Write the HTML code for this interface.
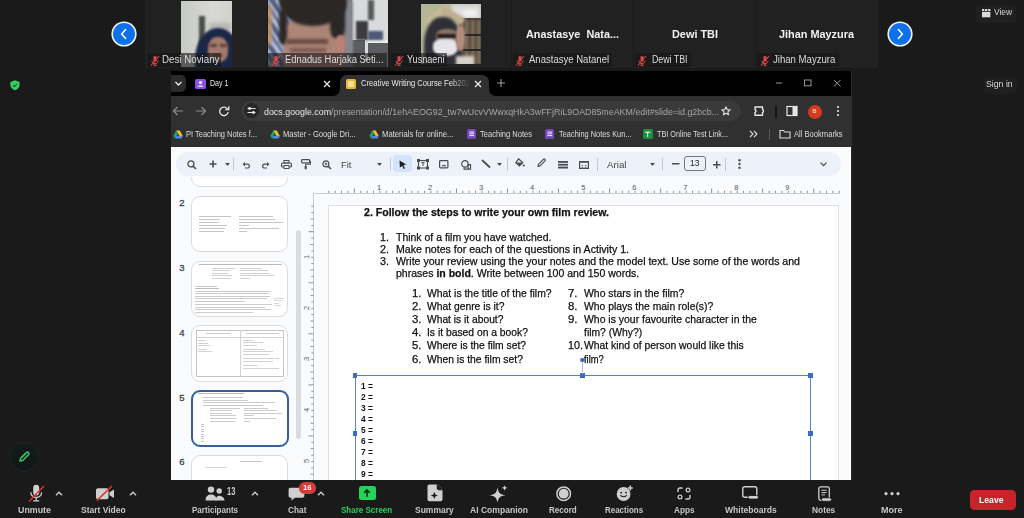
<!DOCTYPE html>
<html><head><meta charset="utf-8">
<style>
*{margin:0;padding:0;box-sizing:border-box}
html,body{width:1024px;height:518px;overflow:hidden;background:#1a1a1a;font-family:"Liberation Sans",sans-serif;position:relative}
.a{position:absolute}
.t{position:absolute;white-space:pre}
svg{overflow:visible}
</style></head><body>
<div class="a" style="left:145px;top:0px;width:122px;height:68px;background:#212121;"></div>
<div class="a" style="left:268px;top:0px;width:121px;height:68px;background:#212121;"></div>
<div class="a" style="left:390px;top:0px;width:121px;height:68px;background:#212121;"></div>
<div class="a" style="left:512px;top:0px;width:121px;height:68px;background:#212121;"></div>
<div class="a" style="left:634px;top:0px;width:121px;height:68px;background:#212121;"></div>
<div class="a" style="left:756px;top:0px;width:122px;height:68px;background:#212121;"></div>
<div class="a" style="left:181px;top:1px;width:51px;height:66px;overflow:hidden;background:linear-gradient(90deg,#c6cac5 0%,#d0d2cd 35%,#d8d8d4 60%,#d2d3ce 100%)">
<div class="a" style="left:18px;top:15px;width:6px;height:36px;background:#4a4d4a;filter:blur(1.2px)"></div>
<div class="a" style="left:28px;top:22px;width:22px;height:8px;background:#b4b5b0;filter:blur(2px)"></div>
<div class="a" style="left:14px;top:27px;width:46px;height:62px;border-radius:50% 50% 25% 25%;background:#1c2748;filter:blur(1.3px)"></div>
<div class="a" style="left:27px;top:36px;width:20px;height:25px;border-radius:45% 45% 40% 40%;background:#a27b6c;filter:blur(1.2px)"></div>
<div class="a" style="left:29px;top:43px;width:7px;height:2.5px;background:#5e423a;filter:blur(.8px)"></div>
<div class="a" style="left:39px;top:43px;width:7px;height:2.5px;background:#5e423a;filter:blur(.8px)"></div>
<div class="a" style="left:32px;top:53px;width:10px;height:3px;background:#7a5548;filter:blur(1px)"></div>
</div>
<div class="a" style="left:268px;top:0px;width:120px;height:67px;overflow:hidden;background:#67759a">
<div class="a" style="left:-4px;top:0;width:30px;height:67px;background:repeating-linear-gradient(55deg,#4f5e86 0 5px,#c6cde0 5px 8px,#6878a0 8px 12px,#c6cde0 12px 14px);filter:blur(1.2px)"></div>
<div class="a" style="left:0;top:5px;width:4px;height:40px;background:#c29060;filter:blur(1.5px)"></div>
<div class="a" style="left:84px;top:0;width:36px;height:41px;background:#d8dadc"></div>
<div class="a" style="left:84px;top:40px;width:36px;height:27px;background:#5c5d60"></div>
<div class="a" style="left:77px;top:0;width:8px;height:67px;background:#85868c;filter:blur(1px)"></div>
<div class="a" style="left:97px;top:40px;width:23px;height:3px;background:#ececec;filter:blur(.5px)"></div>
<div class="a" style="left:97px;top:41px;width:2.5px;height:20px;background:#dcdcdc;filter:blur(.5px)"></div>
<div class="a" style="left:88px;top:21px;width:12px;height:19px;background:#3c3c3e;filter:blur(.8px)"></div>
<div class="a" style="left:100px;top:31px;width:15px;height:9px;background:#4c5a76;filter:blur(.8px)"></div>
<div class="a" style="left:100px;top:0;width:6px;height:20px;background:#5a5a5a;filter:blur(1px)"></div>
<div class="a" style="left:15px;top:16px;width:62px;height:62px;border-radius:35% 35% 25% 25%;background:#ac8577;filter:blur(1.5px)"></div>
<div class="a" style="left:11px;top:-22px;width:68px;height:48px;border-radius:50%;background:#2b2725;filter:blur(1.5px)"></div>
<div class="a" style="left:11px;top:10px;width:8px;height:34px;border-radius:30%;background:#2b2725;filter:blur(1.8px)"></div>
<div class="a" style="left:62px;top:0px;width:15px;height:38px;border-radius:30%;background:#2b2725;filter:blur(1.6px)"></div>
<div class="a" style="left:68px;top:35px;width:9px;height:17px;border-radius:40%;background:#b98173;filter:blur(1px)"></div>
<div class="a" style="left:18px;top:39px;width:42px;height:5px;background:#6a4a42;filter:blur(1.6px)"></div>
<div class="a" style="left:22px;top:48px;width:36px;height:4px;background:#7a5850;filter:blur(1.5px)"></div>
</div>
<div class="a" style="left:421px;top:4px;width:60px;height:60px;overflow:hidden;background:#b4b696">
<div class="a" style="left:30px;top:0;width:30px;height:18px;background:#dcdcdc;filter:blur(2px)"></div>
<div class="a" style="left:42px;top:6px;width:14px;height:6px;background:#f4f4f4;filter:blur(2px)"></div>
<div class="a" style="left:38px;top:14px;width:22px;height:46px;background:#4a3f37"></div>
<div class="a" style="left:40px;top:16px;width:20px;height:44px;background:repeating-linear-gradient(90deg,#6d5d4c 0 3px,#2f2a26 3px 4px,#8a7a66 4px 6px);filter:blur(.8px)"></div>
<div class="a" style="left:40px;top:30px;width:20px;height:2px;background:#2a2522"></div>
<div class="a" style="left:40px;top:45px;width:20px;height:2px;background:#2a2522"></div>
<div class="a" style="left:4px;top:7px;width:26px;height:8px;background:#c9b99a;transform:rotate(-35deg);filter:blur(1.2px)"></div>
<div class="a" style="left:20px;top:8px;width:24px;height:8px;background:#bfae90;transform:rotate(30deg);filter:blur(1.2px)"></div>
<div class="a" style="left:3px;top:13px;width:38px;height:60px;border-radius:45% 45% 20% 20%;background:#2f3037;filter:blur(1.5px)"></div>
<div class="a" style="left:15px;top:25px;width:22px;height:15px;border-radius:40%;background:#8e7263;filter:blur(1px)"></div>
<div class="a" style="left:16px;top:30px;width:21px;height:4px;background:#1e1e1e;filter:blur(.8px)"></div>
<div class="a" style="left:12px;top:35px;width:25px;height:17px;border-radius:35% 35% 45% 45%;background:#e4e4ea;filter:blur(1px)"></div>
<div class="a" style="left:35px;top:21px;width:9px;height:26px;border-radius:40%;background:#b48c7c;filter:blur(1.2px)"></div>
<div class="a" style="left:35px;top:52px;width:18px;height:10px;background:#d8d2ca;filter:blur(1.5px)"></div>
</div>
<div class="a" style="left:147px;top:53px;width:74px;height:14px;background:rgba(22,22,22,0.62);"></div>
<svg class="a" style="left:149.5px;top:54.5px" width="10" height="11" viewBox="0 0 10 11"><path d="M3.5 1.2h3v5.2h-3z" fill="#d84a4a"/><path d="M2 5.6c0 2 1.4 3 3 3s3-1 3-3M5 8.6v1.6M3.2 10.3h3.6" stroke="#d84a4a" stroke-width="1" fill="none"/><path d="M1 10.5L9 1" stroke="#d84a4a" stroke-width="1.1"/></svg>
<div class="t" style="left:162.40px;top:54.00px;font-size:10px;line-height:12.0px;color:#dcdcdc;transform:scaleX(0.9759);transform-origin:0 0;">Desi Noviany</div>
<div class="a" style="left:268px;top:53px;width:119px;height:14px;background:rgba(22,22,22,0.62);"></div>
<svg class="a" style="left:270.5px;top:54.5px" width="10" height="11" viewBox="0 0 10 11"><path d="M3.5 1.2h3v5.2h-3z" fill="#d84a4a"/><path d="M2 5.6c0 2 1.4 3 3 3s3-1 3-3M5 8.6v1.6M3.2 10.3h3.6" stroke="#d84a4a" stroke-width="1" fill="none"/><path d="M1 10.5L9 1" stroke="#d84a4a" stroke-width="1.1"/></svg>
<div class="t" style="left:285.30px;top:54.00px;font-size:10px;line-height:12.0px;color:#dcdcdc;transform:scaleX(0.9375);transform-origin:0 0;">Ednadus Harjaka Seti...</div>
<div class="a" style="left:391px;top:53px;width:56px;height:14px;background:rgba(22,22,22,0.62);"></div>
<svg class="a" style="left:393.5px;top:54.5px" width="10" height="11" viewBox="0 0 10 11"><path d="M3.5 1.2h3v5.2h-3z" fill="#d84a4a"/><path d="M2 5.6c0 2 1.4 3 3 3s3-1 3-3M5 8.6v1.6M3.2 10.3h3.6" stroke="#d84a4a" stroke-width="1" fill="none"/><path d="M1 10.5L9 1" stroke="#d84a4a" stroke-width="1.1"/></svg>
<div class="t" style="left:407.30px;top:54.00px;font-size:10px;line-height:12.0px;color:#dcdcdc;transform:scaleX(0.9112);transform-origin:0 0;">Yusnaeni</div>
<div class="a" style="left:512.5px;top:53px;width:99.5px;height:14px;background:rgba(22,22,22,0.62);"></div>
<svg class="a" style="left:515.0px;top:54.5px" width="10" height="11" viewBox="0 0 10 11"><path d="M3.5 1.2h3v5.2h-3z" fill="#d84a4a"/><path d="M2 5.6c0 2 1.4 3 3 3s3-1 3-3M5 8.6v1.6M3.2 10.3h3.6" stroke="#d84a4a" stroke-width="1" fill="none"/><path d="M1 10.5L9 1" stroke="#d84a4a" stroke-width="1.1"/></svg>
<div class="t" style="left:529.30px;top:54.00px;font-size:10px;line-height:12.0px;color:#dcdcdc;transform:scaleX(0.9541);transform-origin:0 0;">Anastasye Natanel</div>
<div class="a" style="left:634.5px;top:53px;width:56.0px;height:14px;background:rgba(22,22,22,0.62);"></div>
<svg class="a" style="left:637.0px;top:54.5px" width="10" height="11" viewBox="0 0 10 11"><path d="M3.5 1.2h3v5.2h-3z" fill="#d84a4a"/><path d="M2 5.6c0 2 1.4 3 3 3s3-1 3-3M5 8.6v1.6M3.2 10.3h3.6" stroke="#d84a4a" stroke-width="1" fill="none"/><path d="M1 10.5L9 1" stroke="#d84a4a" stroke-width="1.1"/></svg>
<div class="t" style="left:652.00px;top:54.00px;font-size:10px;line-height:12.0px;color:#dcdcdc;transform:scaleX(0.8789);transform-origin:0 0;">Dewi TBI</div>
<div class="a" style="left:757px;top:53px;width:81.5px;height:14px;background:rgba(22,22,22,0.62);"></div>
<svg class="a" style="left:759.5px;top:54.5px" width="10" height="11" viewBox="0 0 10 11"><path d="M3.5 1.2h3v5.2h-3z" fill="#d84a4a"/><path d="M2 5.6c0 2 1.4 3 3 3s3-1 3-3M5 8.6v1.6M3.2 10.3h3.6" stroke="#d84a4a" stroke-width="1" fill="none"/><path d="M1 10.5L9 1" stroke="#d84a4a" stroke-width="1.1"/></svg>
<div class="t" style="left:773.30px;top:54.00px;font-size:10px;line-height:12.0px;color:#dcdcdc;transform:scaleX(0.9595);transform-origin:0 0;">Jihan Mayzura</div>
<div class="t" style="left:526.00px;top:27.90px;font-size:11.5px;line-height:13.799999999999999px;color:#f2f2f2;font-weight:bold;transform:scaleX(0.9448);transform-origin:0 0;">Anastasye&nbsp; Nata...</div>
<div class="t" style="left:671.50px;top:27.90px;font-size:11.5px;line-height:13.799999999999999px;color:#f2f2f2;font-weight:bold;transform:scaleX(0.9472);transform-origin:0 0;">Dewi TBI</div>
<div class="t" style="left:778.80px;top:27.90px;font-size:11.5px;line-height:13.799999999999999px;color:#f2f2f2;font-weight:bold;transform:scaleX(0.9464);transform-origin:0 0;">Jihan Mayzura</div>
<div class="a" style="left:112.6px;top:22.6px;width:22px;height:22px;border-radius:50%;background:#0e71eb;box-shadow:0 0 0 1.6px #f4f4f4"></div>
<svg class="a" style="left:111.6px;top:21.6px" width="24" height="24" viewBox="0 0 24 24"><path d="M13.6 7.5L9.6 12L13.6 16.5" stroke="#fff" stroke-width="1.6" fill="none" stroke-linecap="round" stroke-linejoin="round"/></svg>
<div class="a" style="left:888.5px;top:22.6px;width:22px;height:22px;border-radius:50%;background:#0e71eb;box-shadow:0 0 0 1.6px #f4f4f4"></div>
<svg class="a" style="left:887.5px;top:21.6px" width="24" height="24" viewBox="0 0 24 24"><path d="M10.4 7.5L14.4 12L10.4 16.5" stroke="#fff" stroke-width="1.6" fill="none" stroke-linecap="round" stroke-linejoin="round"/></svg>
<div class="a" style="left:976px;top:5px;width:40px;height:18px;background:#202020;border-radius:4px;"></div>
<svg class="a" style="left:981.5px;top:8.7px" width="8.4" height="8.3" viewBox="0 0 8.4 8.3"><rect x="0" y="0" width="2.3" height="2" fill="#d8d8d8"/><rect x="3.05" y="0" width="2.3" height="2" fill="#d8d8d8"/><rect x="6.1" y="0" width="2.3" height="2" fill="#d8d8d8"/><rect x="0" y="2.8" width="8.4" height="5.5" fill="#d8d8d8"/></svg>
<div class="t" style="left:994.00px;top:7.18px;font-size:9.2px;line-height:11.04px;color:#d6d6d6;transform:scaleX(0.9215);transform-origin:0 0;">View</div>
<div class="a" style="left:983.5px;top:76.7px;width:33px;height:17.6px;background:#1f1f1f;border-radius:4px;"></div>
<div class="t" style="left:985.60px;top:78.82px;font-size:9.3px;line-height:11.16px;color:#d8d8d8;transform:scaleX(0.9389);transform-origin:0 0;">Sign in</div>
<svg class="a" style="left:9.8px;top:79.8px" width="10" height="10.5" viewBox="0 0 10 10.5"><path d="M5 0.3 L9.6 1.9 V5 C9.6 7.7 7.4 9.5 5 10.2 C2.6 9.5 0.4 7.7 0.4 5 V1.9 Z" fill="#36cf63"/><path d="M2.9 5.1 L4.4 6.6 L7.2 3.7" stroke="#0b6a2a" stroke-width="1.2" fill="none"/></svg>
<div class="a" style="left:8.8px;top:442px;width:30px;height:30px;background:#131819;border-radius:50%;border:1px solid #1f2526;"></div>
<svg class="a" style="left:17px;top:450px" width="14" height="14" viewBox="0 0 14 14"><path d="M3 11 L3.6 8.4 L9.4 2.6 C10 2 10.9 2 11.5 2.6 C12.1 3.2 12.1 4.1 11.5 4.7 L5.7 10.5 Z" stroke="#37c86a" stroke-width="1.5" fill="none" stroke-linejoin="round"/></svg>
<div class="a" style="left:171px;top:71px;width:681px;height:409px;background:#000;"></div>
<div class="a" style="left:851px;top:71px;width:1.2px;height:409px;background:#2a2a2a;"></div>
<div class="a" style="left:171px;top:75px;width:15px;height:17px;background:#2a2a2a;border-radius:0 5px 5px 0;"></div>
<svg class="a" style="left:174px;top:80px" width="9" height="7" viewBox="0 0 9 7"><path d="M1.5 2 L4.5 5 L7.5 2" stroke="#e8e8e8" stroke-width="1.4" fill="none"/></svg>
<div class="a" style="left:195px;top:79px;width:11px;height:9.5px;background:#8b4fe3;border-radius:1.5px;"></div>
<svg class="a" style="left:195px;top:79px" width="11" height="9.5" viewBox="0 0 11 9.5"><circle cx="5.5" cy="3.5" r="1.6" fill="#fff"/><path d="M2.6 7.8 C3 5.9 8 5.9 8.4 7.8Z" fill="#fff"/></svg>
<div class="t" style="left:210.00px;top:78.34px;font-size:8.6px;line-height:10.319999999999999px;color:#e6e6e6;transform:scaleX(0.8239);transform-origin:0 0;">Day 1</div>
<svg class="a" style="left:323px;top:80px" width="8" height="8" viewBox="0 0 8 8"><path d="M1 1L7 7M7 1L1 7" stroke="#e6e6e6" stroke-width="1.3"/></svg>
<div class="a" style="left:340px;top:75px;width:149px;height:21px;background:#303030;border-radius:7px 7px 0 0;"></div>
<svg class="a" style="left:333px;top:88px" width="7" height="8" viewBox="0 0 7 8"><path d="M7 0 V8 H0 C4 8 7 5 7 0Z" fill="#303030"/></svg>
<svg class="a" style="left:489px;top:88px" width="7" height="8" viewBox="0 0 7 8"><path d="M0 0 V8 H7 C3 8 0 5 0 0Z" fill="#303030"/></svg>
<div class="a" style="left:346px;top:78.7px;width:10px;height:10px;background:#e9b73a;border-radius:1.5px;"></div>
<div class="a" style="left:347.8px;top:80.6px;width:6.4px;height:6.2px;background:#f7df8e;"></div>
<div class="t" style="left:361.00px;top:78.16px;font-size:8.9px;line-height:10.68px;color:#e8e8e8;transform:scaleX(0.8609);transform-origin:0 0;-webkit-mask-image:linear-gradient(90deg,#000 82%,transparent 100%);">Creative Writing Course Feb202</div>
<svg class="a" style="left:474px;top:80px" width="8" height="8" viewBox="0 0 8 8"><path d="M1 1L7 7M7 1L1 7" stroke="#eaeaea" stroke-width="1.3"/></svg>
<svg class="a" style="left:496px;top:78px" width="10" height="10" viewBox="0 0 10 10"><path d="M5 1V9M1 5H9" stroke="#9a9a9a" stroke-width="1.1"/></svg>
<svg class="a" style="left:775px;top:78px" width="70" height="10" viewBox="0 0 70 10"><path d="M1 5H7" stroke="#9a9a9a" stroke-width="1"/><rect x="29.5" y="2" width="6.5" height="5.8" stroke="#9a9a9a" stroke-width="1" fill="none"/><path d="M59 2L65.5 8.5M65.5 2L59 8.5" stroke="#9a9a9a" stroke-width="1"/></svg>
<div class="a" style="left:171px;top:95.5px;width:681px;height:51.5px;background:#303030;"></div>
<svg class="a" style="left:172px;top:105px" width="60" height="12" viewBox="0 0 60 12"><path d="M11 6H1.5M5.5 2L1.5 6L5.5 10" stroke="#8c8c8c" stroke-width="1.2" fill="none"/><path d="M24 6H33.5M29.5 2L33.5 6L29.5 10" stroke="#8c8c8c" stroke-width="1.2" fill="none"/><path d="M55.6 4 A4.3 4.3 0 1 0 56.2 7.2" stroke="#e6e6e6" stroke-width="1.3" fill="none"/><path d="M56.8 1.2V4.6H53.4" stroke="#e6e6e6" stroke-width="1.3" fill="none"/></svg>
<div class="a" style="left:241px;top:101px;width:500px;height:19.5px;background:#3a3a3a;border-radius:10px;"></div>
<div class="a" style="left:244px;top:103px;width:15px;height:15px;background:#272727;border-radius:50%;"></div>
<svg class="a" style="left:246px;top:105px" width="11" height="11" viewBox="0 0 11 11"><path d="M1.5 3.5H9.5M1.5 7.5H9.5" stroke="#e6e6e6" stroke-width="1.1"/><circle cx="3.6" cy="3.5" r="1.4" fill="#e6e6e6"/><circle cx="7.4" cy="7.5" r="1.4" fill="#e6e6e6"/></svg>
<div class="t" style="left:264.00px;top:105.56px;font-size:9.4px;line-height:11.28px;color:#a6a6a6;transform:scaleX(0.9465);transform-origin:0 0;"><span style="color:#e8e8e8">docs.google.com</span>/presentation/d/1ehAEOG92_tw7wUcvVWwxqHkA3wFFjRiL9OAD85meAKM/edit#slide=id.g2bcb...</div>
<svg class="a" style="left:721px;top:106px" width="10" height="10" viewBox="0 0 10 10"><path d="M5 0.8 L6.2 3.6 L9.2 3.9 L6.9 5.8 L7.6 8.8 L5 7.2 L2.4 8.8 L3.1 5.8 L0.8 3.9 L3.8 3.6 Z" stroke="#e0e0e0" stroke-width="1.1" fill="none" stroke-linejoin="round"/></svg>
<svg class="a" style="left:752.5px;top:105px" width="12" height="12" viewBox="0 0 12 12"><path d="M2 2 H9.5 V4.5 C10.8 4.5 10.8 7.5 9.5 7.5 V10.2 H2 V7.5 C3.2 7.5 3.2 4.5 2 4.5 Z" stroke="#e6e6e6" stroke-width="1.4" fill="none" stroke-linejoin="round"/></svg>
<div class="a" style="left:774.5px;top:105.5px;width:2px;height:12px;background:#141414;"></div>
<svg class="a" style="left:786px;top:105px" width="12" height="12" viewBox="0 0 12 12"><rect x="1" y="1.5" width="10" height="9" stroke="#e6e6e6" stroke-width="1.2" fill="none"/><rect x="6.5" y="1.5" width="4.5" height="9" fill="#e6e6e6"/></svg>
<div class="a" style="left:807.5px;top:104.5px;width:14px;height:14px;background:#d23c1c;border-radius:50%;"></div>
<div class="t" style="left:812.51px;top:108.20px;font-size:5.5px;line-height:6.6px;color:#f4d0c8;font-weight:bold;">B</div>
<svg class="a" style="left:836px;top:105px" width="4" height="12" viewBox="0 0 4 12"><circle cx="2" cy="2" r="1.1" fill="#e6e6e6"/><circle cx="2" cy="6" r="1.1" fill="#e6e6e6"/><circle cx="2" cy="10" r="1.1" fill="#e6e6e6"/></svg>
<svg class="a" style="left:172.5px;top:129.5px" width="10" height="9" viewBox="0 0 10 9"><path d="M3.3 0.5h3.4l3 5.2-1.7 2.8z" fill="#f9bd2c"/><path d="M3.3 0.5L0.3 5.7 2 8.5 5 3.3z" fill="#1fa463"/><path d="M2 8.5h6l1.7-2.8H3.7z" fill="#4e89f5"/></svg>
<div class="t" style="left:185.50px;top:128.78px;font-size:8.7px;line-height:10.44px;color:#dcdcdc;transform:scaleX(0.8614);transform-origin:0 0;">PI Teaching Notes f...</div>
<svg class="a" style="left:270px;top:129.5px" width="10" height="9" viewBox="0 0 10 9"><path d="M3.3 0.5h3.4l3 5.2-1.7 2.8z" fill="#f9bd2c"/><path d="M3.3 0.5L0.3 5.7 2 8.5 5 3.3z" fill="#1fa463"/><path d="M2 8.5h6l1.7-2.8H3.7z" fill="#4e89f5"/></svg>
<div class="t" style="left:283.00px;top:128.78px;font-size:8.7px;line-height:10.44px;color:#dcdcdc;transform:scaleX(0.8730);transform-origin:0 0;">Master - Google Dri...</div>
<svg class="a" style="left:369px;top:129.5px" width="10" height="9" viewBox="0 0 10 9"><path d="M3.3 0.5h3.4l3 5.2-1.7 2.8z" fill="#f9bd2c"/><path d="M3.3 0.5L0.3 5.7 2 8.5 5 3.3z" fill="#1fa463"/><path d="M2 8.5h6l1.7-2.8H3.7z" fill="#4e89f5"/></svg>
<div class="t" style="left:382.00px;top:128.78px;font-size:8.7px;line-height:10.44px;color:#dcdcdc;transform:scaleX(0.8866);transform-origin:0 0;">Materials for online...</div>
<div class="a" style="left:466.5px;top:129.2px;width:9.5px;height:9.5px;background:#7248b9;border-radius:1.5px;"></div>
<svg class="a" style="left:466.5px;top:129.2px" width="9.5" height="9.5" viewBox="0 0 9.5 9.5"><path d="M2.3 3H7.2M2.3 4.8H7.2M2.3 6.6H7.2" stroke="#fff" stroke-width="0.9"/></svg>
<div class="t" style="left:480.00px;top:128.78px;font-size:8.7px;line-height:10.44px;color:#dcdcdc;transform:scaleX(0.8682);transform-origin:0 0;">Teaching Notes</div>
<div class="a" style="left:544.5px;top:129.2px;width:9.5px;height:9.5px;background:#7248b9;border-radius:1.5px;"></div>
<svg class="a" style="left:544.5px;top:129.2px" width="9.5" height="9.5" viewBox="0 0 9.5 9.5"><path d="M2.3 3H7.2M2.3 4.8H7.2M2.3 6.6H7.2" stroke="#fff" stroke-width="0.9"/></svg>
<div class="t" style="left:558.50px;top:128.78px;font-size:8.7px;line-height:10.44px;color:#dcdcdc;transform:scaleX(0.8529);transform-origin:0 0;">Teaching Notes Kun...</div>
<div class="a" style="left:643px;top:129.2px;width:9.5px;height:9.5px;background:#1e8e3e;border-radius:1.5px;"></div>
<svg class="a" style="left:643px;top:129.2px" width="9.5" height="9.5" viewBox="0 0 9.5 9.5"><path d="M2 3.2H7.5M4.7 3.2V8" stroke="#fff" stroke-width="1"/></svg>
<div class="t" style="left:657.00px;top:128.78px;font-size:8.7px;line-height:10.44px;color:#dcdcdc;transform:scaleX(0.8370);transform-origin:0 0;">TBI Online Test Link...</div>
<svg class="a" style="left:749px;top:130px" width="9" height="8" viewBox="0 0 9 8"><path d="M1 1L4 4L1 7M5 1L8 4L5 7" stroke="#dcdcdc" stroke-width="1.1" fill="none"/></svg>
<div class="a" style="left:768.5px;top:128.5px;width:1.2px;height:11px;background:#5a5a5a;"></div>
<svg class="a" style="left:779px;top:129px" width="12" height="10" viewBox="0 0 12 10"><path d="M1 1.5H4.5L5.8 3H11V9H1Z" stroke="#dcdcdc" stroke-width="1.1" fill="none"/></svg>
<div class="t" style="left:794.00px;top:128.78px;font-size:8.7px;line-height:10.44px;color:#dcdcdc;transform:scaleX(0.8734);transform-origin:0 0;">All Bookmarks</div>
<div class="a" style="left:171px;top:147px;width:680px;height:333px;overflow:hidden;background:#f9fbfd">
<div class="a" style="left:5px;top:4.5px;width:664.5px;height:24.3px;background:#edf2fa;border-radius:12px;"></div>
<svg class="a" style="left:16px;top:12.5px" width="10" height="10" viewBox="0 0 10 10"><circle cx="3.9" cy="3.9" r="3" stroke="#4a4d50" stroke-width="1.3" fill="none"/><path d="M6.1 6.1L9 9" stroke="#4a4d50" stroke-width="1.5"/></svg>
<svg class="a" style="left:38px;top:13px" width="8" height="8" viewBox="0 0 8 8"><path d="M4 0.5V7.5M0.5 4H7.5" stroke="#4a4d50" stroke-width="1.6"/></svg>
<svg class="a" style="left:53.5px;top:16px" width="5" height="3" viewBox="0 0 5 3"><path d="M0 0H5L2.5 3Z" fill="#4a4d50"/></svg>
<div class="a" style="left:62px;top:10.5px;width:0.9px;height:13px;background:#c7c7c7;"></div>
<svg class="a" style="left:71px;top:13.5px" width="8" height="7.5" viewBox="0 0 8 7.5"><path d="M2.2 3.2H5.3C6.6 3.2 7.4 4.1 7.4 5.2C7.4 6.3 6.6 7 5.3 7H3" stroke="#4a4d50" stroke-width="1.2" fill="none"/><path d="M0.6 3.2L3 0.9V5.5Z" fill="#4a4d50"/></svg>
<svg class="a" style="left:91px;top:13.5px" width="8" height="7.5" viewBox="0 0 8 7.5"><path d="M5.8 3.2H2.7C1.4 3.2 0.6 4.1 0.6 5.2C0.6 6.3 1.4 7 2.7 7H5" stroke="#4a4d50" stroke-width="1.2" fill="none"/><path d="M7.4 3.2L5 0.9V5.5Z" fill="#4a4d50"/></svg>
<svg class="a" style="left:110px;top:12.5px" width="11" height="9" viewBox="0 0 11 9"><rect x="3" y="0.5" width="5" height="2.5" stroke="#4a4d50" stroke-width="1" fill="none"/><rect x="0.6" y="3" width="9.8" height="4" rx="1" stroke="#4a4d50" stroke-width="1.2" fill="none"/><rect x="3" y="5.5" width="5" height="3" stroke="#4a4d50" stroke-width="1" fill="#edf2fa"/></svg>
<svg class="a" style="left:130px;top:12px" width="10" height="10.5" viewBox="0 0 10 10.5"><rect x="0.6" y="0.6" width="8" height="3.2" rx="0.8" stroke="#4a4d50" stroke-width="1.2" fill="none"/><path d="M8.6 2.2H9.4V5.3H4.7V7" stroke="#4a4d50" stroke-width="1.1" fill="none"/><rect x="3.6" y="7" width="2.2" height="3.3" rx="0.6" fill="#4a4d50"/></svg>
<svg class="a" style="left:151px;top:12.5px" width="10" height="10" viewBox="0 0 10 10"><circle cx="3.9" cy="3.9" r="3" stroke="#4a4d50" stroke-width="1.2" fill="none"/><path d="M6.1 6.1L9 9" stroke="#4a4d50" stroke-width="1.5"/><path d="M3.9 2.5V5.3M2.5 3.9H5.3" stroke="#4a4d50" stroke-width="0.9"/></svg>
<div class="t" style="left:170.00px;top:11.50px;font-size:9.5px;line-height:11.4px;color:#444746;transform:scaleX(0.9941);transform-origin:0 0;">Fit</div>
<svg class="a" style="left:205.5px;top:16px" width="5" height="3" viewBox="0 0 5 3"><path d="M0 0H5L2.5 3Z" fill="#4a4d50"/></svg>
<div class="a" style="left:219.3px;top:10.5px;width:0.9px;height:13px;background:#c7c7c7;"></div>
<div class="a" style="left:222px;top:8px;width:19px;height:17.4px;background:#d3e3fd;border-radius:4px;"></div>
<svg class="a" style="left:228px;top:13px" width="8" height="9.5" viewBox="0 0 8 9.5"><path d="M0.5 0.5L7.3 4.6L4.4 5.2L6 8.6L4.8 9.1L3.3 5.9L0.9 7.6Z" fill="#1f1f1f"/></svg>
<svg class="a" style="left:246px;top:12px" width="12" height="10.5" viewBox="0 0 12 10.5"><rect x="1.5" y="1.5" width="9" height="7.5" stroke="#4a4d50" stroke-width="1.1" fill="none"/><rect x="0" y="0" width="3" height="3" fill="#4a4d50"/><rect x="9" y="0" width="3" height="3" fill="#4a4d50"/><rect x="0" y="7.5" width="3" height="3" fill="#4a4d50"/><rect x="9" y="7.5" width="3" height="3" fill="#4a4d50"/><path d="M4.3 3.6H7.7M6 3.6V7" stroke="#4a4d50" stroke-width="1"/></svg>
<svg class="a" style="left:268px;top:13px" width="9.5" height="8.5" viewBox="0 0 9.5 8.5"><rect x="0.6" y="0.6" width="8.3" height="7.3" rx="0.8" stroke="#4a4d50" stroke-width="1.2" fill="none"/><path d="M2.5 6.2L4 4.6L5 5.6L6 4.5L7.2 6.2Z" fill="#4a4d50"/></svg>
<svg class="a" style="left:289.5px;top:12.5px" width="11" height="10" viewBox="0 0 11 10"><circle cx="3.9" cy="3.9" r="3.2" stroke="#4a4d50" stroke-width="1.2" fill="none"/><path d="M7 4.6V9.2H3.1V7.2" stroke="#4a4d50" stroke-width="1.2" fill="none" stroke-linejoin="round"/><path d="M7 4.6H9.5V9.2H7" stroke="#4a4d50" stroke-width="1.2" fill="none"/></svg>
<svg class="a" style="left:309.5px;top:12px" width="10" height="9.5" viewBox="0 0 10 9.5"><path d="M1.5 1.5L8.5 8" stroke="#4a4d50" stroke-width="1.8" stroke-linecap="round"/></svg>
<svg class="a" style="left:326px;top:16px" width="5" height="3" viewBox="0 0 5 3"><path d="M0 0H5L2.5 3Z" fill="#4a4d50"/></svg>
<div class="a" style="left:335.5px;top:10.5px;width:0.9px;height:13px;background:#c7c7c7;"></div>
<svg class="a" style="left:344px;top:11.3px" width="10" height="9" viewBox="0 0 10 9"><path d="M3.5 0.8L7.8 4.8L4.4 8L0.8 4.6Z" stroke="#4a4d50" stroke-width="1.2" fill="none"/><path d="M0.8 4.6H7.8L4.4 8Z" fill="#4a4d50"/><circle cx="8.8" cy="7.5" r="1.1" fill="#4a4d50"/></svg>
<svg class="a" style="left:365.5px;top:11px" width="9" height="9.5" viewBox="0 0 9 9.5"><path d="M1 8.5L1.4 6.3L6.4 1.3C6.9 0.8 7.5 0.8 8 1.3C8.5 1.8 8.5 2.4 8 2.9L3 7.9Z" stroke="#4a4d50" stroke-width="1.2" fill="none" stroke-linejoin="round"/></svg>
<svg class="a" style="left:386.5px;top:13.5px" width="10" height="7.5" viewBox="0 0 10 7.5"><rect x="0" y="0" width="10" height="1.8" fill="#4a4d50"/><rect x="0" y="2.8" width="10" height="1.8" fill="#4a4d50"/><rect x="0" y="5.6" width="10" height="1.9" fill="#4a4d50"/></svg>
<svg class="a" style="left:408px;top:13.5px" width="10" height="7.5" viewBox="0 0 10 7.5"><rect x="0" y="0" width="10" height="1.8" fill="#4a4d50"/><path d="M0.6 1.8V7.4H9.4V1.8" stroke="#4a4d50" stroke-width="1.2" fill="none"/><path d="M2.5 4.5H4.2M5.8 4.5H7.5M2.5 6.4H4.2M5.8 6.4H7.5" stroke="#4a4d50" stroke-width="1" opacity="0.8"/></svg>
<div class="a" style="left:426px;top:10.5px;width:0.9px;height:13px;background:#c7c7c7;"></div>
<div class="t" style="left:436.00px;top:11.50px;font-size:9.5px;line-height:11.4px;color:#444746;transform:scaleX(1.0255);transform-origin:0 0;">Arial</div>
<svg class="a" style="left:478.5px;top:16px" width="5" height="3" viewBox="0 0 5 3"><path d="M0 0H5L2.5 3Z" fill="#4a4d50"/></svg>
<div class="a" style="left:491px;top:10.5px;width:0.9px;height:13px;background:#c7c7c7;"></div>
<svg class="a" style="left:501px;top:16.3px" width="7.5" height="1.5" viewBox="0 0 7.5 1.5"><rect width="7.5" height="1.5" fill="#4a4d50"/></svg>
<div class="a" style="left:513px;top:9px;width:22px;height:15px;background:transparent;border:1px solid #747775;border-radius:3px;"></div>
<div class="t" style="left:519.25px;top:11.20px;font-size:9px;line-height:10.799999999999999px;color:#1f1f1f;transform:scaleX(0.9485);transform-origin:0 0;">13</div>
<svg class="a" style="left:542px;top:13.5px" width="7.5" height="7.5" viewBox="0 0 7.5 7.5"><path d="M3.75 0V7.5M0 3.75H7.5" stroke="#4a4d50" stroke-width="1.5"/></svg>
<div class="a" style="left:554.3px;top:10.5px;width:0.9px;height:13px;background:#c7c7c7;"></div>
<svg class="a" style="left:566.5px;top:12px" width="3" height="10" viewBox="0 0 3 10"><circle cx="1.5" cy="1.3" r="1.2" fill="#4a4d50"/><circle cx="1.5" cy="5" r="1.2" fill="#4a4d50"/><circle cx="1.5" cy="8.7" r="1.2" fill="#4a4d50"/></svg>
<svg class="a" style="left:649px;top:15px" width="7" height="4.5" viewBox="0 0 7 4.5"><path d="M0.6 0.6L3.5 3.6L6.4 0.6" stroke="#4a4d50" stroke-width="1.3" fill="none"/></svg>
<div class="a" style="left:0px;top:30px;width:142px;height:303px;overflow:hidden">
<div class="a" style="left:20.2px;top:-46.4px;width:97.3px;height:56.6px;background:#fff;border:1px solid #dadce0;border-radius:9px;"></div>
<div class="a" style="left:20.2px;top:18.5px;width:97.3px;height:56.6px;background:#fff;border:1px solid #dadce0;border-radius:9px;"></div>
<div class="t" style="left:8.35px;top:20.00px;font-size:9.5px;line-height:11.4px;color:#444;-webkit-text-stroke:0.3px #444;">2</div>
<div class="a" style="left:20.2px;top:83.5px;width:97.3px;height:56.6px;background:#fff;border:1px solid #dadce0;border-radius:9px;"></div>
<div class="t" style="left:8.35px;top:85.00px;font-size:9.5px;line-height:11.4px;color:#444;-webkit-text-stroke:0.3px #444;">3</div>
<div class="a" style="left:20.2px;top:148px;width:97.3px;height:56.6px;background:#fff;border:1px solid #dadce0;border-radius:9px;"></div>
<div class="t" style="left:8.35px;top:149.50px;font-size:9.5px;line-height:11.4px;color:#444;-webkit-text-stroke:0.3px #444;">4</div>
<div class="a" style="left:19.5px;top:212.5px;width:98.5px;height:57.5px;background:#fff;border:2px solid #345e9e;border-radius:9px;"></div>
<div class="t" style="left:8.35px;top:214.50px;font-size:9.5px;line-height:11.4px;color:#444;-webkit-text-stroke:0.3px #444;">5</div>
<div class="a" style="left:20.2px;top:277.8px;width:97.3px;height:56.6px;background:#fff;border:1px solid #dadce0;border-radius:9px;"></div>
<div class="t" style="left:8.35px;top:279.30px;font-size:9.5px;line-height:11.4px;color:#444;-webkit-text-stroke:0.3px #444;">6</div>
<div class="a" style="left:28px;top:38.5px;width:32px;height:0.9px;background:#c6c6c6;"></div>
<div class="a" style="left:28px;top:41.6px;width:21px;height:0.9px;background:#c6c6c6;"></div>
<div class="a" style="left:28px;top:44.7px;width:20px;height:0.9px;background:#c6c6c6;"></div>
<div class="a" style="left:28px;top:47.8px;width:28px;height:0.9px;background:#c6c6c6;"></div>
<div class="a" style="left:28px;top:50.9px;width:26px;height:0.9px;background:#c6c6c6;"></div>
<div class="a" style="left:28px;top:54.0px;width:25px;height:0.9px;background:#c6c6c6;"></div>
<div class="a" style="left:68px;top:38.5px;width:34px;height:0.9px;background:#c6c6c6;"></div>
<div class="a" style="left:68px;top:41.6px;width:36px;height:0.9px;background:#c6c6c6;"></div>
<div class="a" style="left:68px;top:44.7px;width:44px;height:0.9px;background:#c6c6c6;"></div>
<div class="a" style="left:68px;top:47.8px;width:10px;height:0.9px;background:#c6c6c6;"></div>
<div class="a" style="left:68px;top:50.9px;width:40px;height:0.9px;background:#c6c6c6;"></div>
<div class="a" style="left:68px;top:54.0px;width:8px;height:0.9px;background:#c6c6c6;"></div>
<div class="a" style="left:28px;top:86.8px;width:83px;height:1.1px;background:#bababa;"></div>
<div class="a" style="left:41px;top:90.5px;width:23px;height:0.9px;background:#d0d0d0;"></div>
<div class="a" style="left:41px;top:93.1px;width:18px;height:0.9px;background:#d0d0d0;"></div>
<div class="a" style="left:41px;top:95.7px;width:16px;height:0.9px;background:#d0d0d0;"></div>
<div class="a" style="left:41px;top:98.3px;width:20px;height:0.9px;background:#d0d0d0;"></div>
<div class="a" style="left:41px;top:100.9px;width:19px;height:0.9px;background:#d0d0d0;"></div>
<div class="a" style="left:69px;top:90.5px;width:22px;height:0.9px;background:#d0d0d0;"></div>
<div class="a" style="left:69px;top:93.1px;width:28px;height:0.9px;background:#d0d0d0;"></div>
<div class="a" style="left:69px;top:95.7px;width:30px;height:0.9px;background:#d0d0d0;"></div>
<div class="a" style="left:69px;top:98.3px;width:34px;height:0.9px;background:#d0d0d0;"></div>
<div class="a" style="left:69px;top:100.9px;width:10px;height:0.9px;background:#d0d0d0;"></div>
<div class="a" style="left:24px;top:108.5px;width:22px;height:0.9px;background:#cacaca;"></div>
<div class="a" style="left:24px;top:110.8px;width:24px;height:1.1px;background:#bababa;"></div>
<div class="a" style="left:24px;top:113.5px;width:76px;height:0.9px;background:#cbcbcb;"></div>
<div class="a" style="left:24px;top:116.0px;width:74px;height:0.9px;background:#cbcbcb;"></div>
<div class="a" style="left:24px;top:118.5px;width:75px;height:0.9px;background:#cbcbcb;"></div>
<div class="a" style="left:24px;top:121.0px;width:72px;height:0.9px;background:#cbcbcb;"></div>
<div class="a" style="left:24px;top:123.5px;width:50px;height:0.9px;background:#cbcbcb;"></div>
<div class="a" style="left:24px;top:127.0px;width:77px;height:0.9px;background:#cbcbcb;"></div>
<div class="a" style="left:24px;top:129.6px;width:70px;height:0.9px;background:#cbcbcb;"></div>
<div class="a" style="left:24px;top:132.2px;width:76px;height:0.9px;background:#cbcbcb;"></div>
<div class="a" style="left:24px;top:134.8px;width:58px;height:0.9px;background:#cbcbcb;"></div>
<div class="a" style="left:103px;top:121.0px;width:10px;height:0.9px;background:#d8d8d8;"></div>
<div class="a" style="left:103px;top:123.3px;width:8px;height:0.9px;background:#d8d8d8;"></div>
<div class="a" style="left:103px;top:125.6px;width:5px;height:0.9px;background:#d8d8d8;"></div>
<div class="a" style="left:103px;top:127.9px;width:7px;height:0.9px;background:#d8d8d8;"></div>
<div class="a" style="left:25px;top:152.5px;width:88px;height:47.5px;background:transparent;border:0.8px solid #c4c4c4;"></div>
<div class="a" style="left:25px;top:160px;width:88px;height:0.8px;background:#d2d2d2;"></div>
<div class="a" style="left:69.3px;top:152.5px;width:0.8px;height:47.5px;background:#d2d2d2;"></div>
<div class="a" style="left:35px;top:155.8px;width:24px;height:0.9px;background:#cacaca;"></div>
<div class="a" style="left:75px;top:155.8px;width:33px;height:0.9px;background:#cacaca;"></div>
<div class="a" style="left:27px;top:163.0px;width:8px;height:0.9px;background:#d2d2d2;"></div>
<div class="a" style="left:27px;top:165.6px;width:10px;height:0.9px;background:#d2d2d2;"></div>
<div class="a" style="left:27px;top:168.2px;width:12px;height:0.9px;background:#d2d2d2;"></div>
<div class="a" style="left:27px;top:171.5px;width:9px;height:0.9px;background:#d2d2d2;"></div>
<div class="a" style="left:27px;top:174.1px;width:14px;height:0.9px;background:#d2d2d2;"></div>
<div class="a" style="left:72px;top:162.5px;width:10px;height:0.9px;background:#d2d2d2;"></div>
<div class="a" style="left:72px;top:165.1px;width:20px;height:0.9px;background:#d2d2d2;"></div>
<div class="a" style="left:72px;top:167.7px;width:14px;height:0.9px;background:#d2d2d2;"></div>
<div class="a" style="left:72px;top:171.5px;width:22px;height:0.9px;background:#d2d2d2;"></div>
<div class="a" style="left:72px;top:174.1px;width:30px;height:0.9px;background:#d2d2d2;"></div>
<div class="a" style="left:72px;top:176.7px;width:26px;height:0.9px;background:#d2d2d2;"></div>
<div class="a" style="left:72px;top:181.0px;width:36px;height:0.9px;background:#d2d2d2;"></div>
<div class="a" style="left:72px;top:183.6px;width:30px;height:0.9px;background:#d2d2d2;"></div>
<div class="a" style="left:72px;top:188.0px;width:14px;height:0.9px;background:#d2d2d2;"></div>
<div class="a" style="left:72px;top:190.6px;width:36px;height:0.9px;background:#d2d2d2;"></div>
<div class="a" style="left:27px;top:216.3px;width:46px;height:1px;background:#bababa;"></div>
<div class="a" style="left:32px;top:220.0px;width:40px;height:0.9px;background:#cbcbcb;"></div>
<div class="a" style="left:32px;top:222.5px;width:45px;height:0.9px;background:#cbcbcb;"></div>
<div class="a" style="left:32px;top:225.0px;width:72px;height:0.9px;background:#cbcbcb;"></div>
<div class="a" style="left:32px;top:227.5px;width:60px;height:0.9px;background:#cbcbcb;"></div>
<div class="a" style="left:39px;top:230.5px;width:30px;height:0.9px;background:#cbcbcb;"></div>
<div class="a" style="left:39px;top:233.1px;width:22px;height:0.9px;background:#cbcbcb;"></div>
<div class="a" style="left:39px;top:235.7px;width:22px;height:0.9px;background:#cbcbcb;"></div>
<div class="a" style="left:39px;top:238.3px;width:26px;height:0.9px;background:#cbcbcb;"></div>
<div class="a" style="left:39px;top:240.9px;width:26px;height:0.9px;background:#cbcbcb;"></div>
<div class="a" style="left:39px;top:243.5px;width:25px;height:0.9px;background:#cbcbcb;"></div>
<div class="a" style="left:73px;top:230.5px;width:24px;height:0.9px;background:#cbcbcb;"></div>
<div class="a" style="left:73px;top:233.1px;width:33px;height:0.9px;background:#cbcbcb;"></div>
<div class="a" style="left:73px;top:235.7px;width:38px;height:0.9px;background:#cbcbcb;"></div>
<div class="a" style="left:73px;top:238.3px;width:10px;height:0.9px;background:#cbcbcb;"></div>
<div class="a" style="left:73px;top:240.9px;width:32px;height:0.9px;background:#cbcbcb;"></div>
<div class="a" style="left:73px;top:243.5px;width:6px;height:0.9px;background:#cbcbcb;"></div>
<div class="a" style="left:30px;top:247.0px;width:3px;height:0.9px;background:#c4c4c4;"></div>
<div class="a" style="left:30px;top:249.4px;width:3px;height:0.9px;background:#c4c4c4;"></div>
<div class="a" style="left:30px;top:251.8px;width:3px;height:0.9px;background:#c4c4c4;"></div>
<div class="a" style="left:30px;top:254.2px;width:3px;height:0.9px;background:#c4c4c4;"></div>
<div class="a" style="left:30px;top:256.6px;width:3px;height:0.9px;background:#c4c4c4;"></div>
<div class="a" style="left:30px;top:259.0px;width:3px;height:0.9px;background:#c4c4c4;"></div>
<div class="a" style="left:30px;top:261.4px;width:3px;height:0.9px;background:#c4c4c4;"></div>
<div class="a" style="left:30px;top:263.8px;width:3px;height:0.9px;background:#c4c4c4;"></div>
<div class="a" style="left:69px;top:283.5px;width:22px;height:1px;background:#c4c4c4;"></div>
<div class="a" style="left:34px;top:290px;width:22px;height:0.8px;background:#d2d2d2;"></div>
<div class="a" style="left:125px;top:53px;width:5px;height:209px;background:#dadce0;border-radius:3px;"></div>
</div>
<div class="a" style="left:142px;top:46px;width:527px;height:0.9px;background:#c9cccf;"></div>
<div class="a" style="left:142px;top:46px;width:0.9px;height:300px;background:#c9cccf;"></div>
<svg class="a" style="left:157px;top:40.4px" width="512" height="6" viewBox="0 -6 512 6"><rect x="0.35" y="-2.20" width="0.9" height="2.2" fill="#80868b"/><rect x="6.73" y="-2.20" width="0.9" height="2.2" fill="#80868b"/><rect x="13.11" y="-2.20" width="0.9" height="2.2" fill="#80868b"/><rect x="19.49" y="-2.20" width="0.9" height="2.2" fill="#80868b"/><rect x="25.87" y="-4.50" width="0.9" height="4.5" fill="#80868b"/><rect x="32.26" y="-2.20" width="0.9" height="2.2" fill="#80868b"/><rect x="38.64" y="-2.20" width="0.9" height="2.2" fill="#80868b"/><rect x="45.02" y="-2.20" width="0.9" height="2.2" fill="#80868b"/><rect x="51.40" y="-2.20" width="0.9" height="2.2" fill="#80868b"/><rect x="57.78" y="-2.20" width="0.9" height="2.2" fill="#80868b"/><rect x="64.16" y="-2.20" width="0.9" height="2.2" fill="#80868b"/><rect x="70.54" y="-2.20" width="0.9" height="2.2" fill="#80868b"/><rect x="76.92" y="-4.50" width="0.9" height="4.5" fill="#80868b"/><rect x="83.31" y="-2.20" width="0.9" height="2.2" fill="#80868b"/><rect x="89.69" y="-2.20" width="0.9" height="2.2" fill="#80868b"/><rect x="96.07" y="-2.20" width="0.9" height="2.2" fill="#80868b"/><rect x="102.45" y="-2.20" width="0.9" height="2.2" fill="#80868b"/><rect x="108.83" y="-2.20" width="0.9" height="2.2" fill="#80868b"/><rect x="115.21" y="-2.20" width="0.9" height="2.2" fill="#80868b"/><rect x="121.59" y="-2.20" width="0.9" height="2.2" fill="#80868b"/><rect x="127.97" y="-4.50" width="0.9" height="4.5" fill="#80868b"/><rect x="134.36" y="-2.20" width="0.9" height="2.2" fill="#80868b"/><rect x="140.74" y="-2.20" width="0.9" height="2.2" fill="#80868b"/><rect x="147.12" y="-2.20" width="0.9" height="2.2" fill="#80868b"/><rect x="153.50" y="-2.20" width="0.9" height="2.2" fill="#80868b"/><rect x="159.88" y="-2.20" width="0.9" height="2.2" fill="#80868b"/><rect x="166.26" y="-2.20" width="0.9" height="2.2" fill="#80868b"/><rect x="172.64" y="-2.20" width="0.9" height="2.2" fill="#80868b"/><rect x="179.02" y="-4.50" width="0.9" height="4.5" fill="#80868b"/><rect x="185.41" y="-2.20" width="0.9" height="2.2" fill="#80868b"/><rect x="191.79" y="-2.20" width="0.9" height="2.2" fill="#80868b"/><rect x="198.17" y="-2.20" width="0.9" height="2.2" fill="#80868b"/><rect x="204.55" y="-2.20" width="0.9" height="2.2" fill="#80868b"/><rect x="210.93" y="-2.20" width="0.9" height="2.2" fill="#80868b"/><rect x="217.31" y="-2.20" width="0.9" height="2.2" fill="#80868b"/><rect x="223.69" y="-2.20" width="0.9" height="2.2" fill="#80868b"/><rect x="230.08" y="-4.50" width="0.9" height="4.5" fill="#80868b"/><rect x="236.46" y="-2.20" width="0.9" height="2.2" fill="#80868b"/><rect x="242.84" y="-2.20" width="0.9" height="2.2" fill="#80868b"/><rect x="249.22" y="-2.20" width="0.9" height="2.2" fill="#80868b"/><rect x="255.60" y="-2.20" width="0.9" height="2.2" fill="#80868b"/><rect x="261.98" y="-2.20" width="0.9" height="2.2" fill="#80868b"/><rect x="268.36" y="-2.20" width="0.9" height="2.2" fill="#80868b"/><rect x="274.74" y="-2.20" width="0.9" height="2.2" fill="#80868b"/><rect x="281.12" y="-4.50" width="0.9" height="4.5" fill="#80868b"/><rect x="287.51" y="-2.20" width="0.9" height="2.2" fill="#80868b"/><rect x="293.89" y="-2.20" width="0.9" height="2.2" fill="#80868b"/><rect x="300.27" y="-2.20" width="0.9" height="2.2" fill="#80868b"/><rect x="306.65" y="-2.20" width="0.9" height="2.2" fill="#80868b"/><rect x="313.03" y="-2.20" width="0.9" height="2.2" fill="#80868b"/><rect x="319.41" y="-2.20" width="0.9" height="2.2" fill="#80868b"/><rect x="325.79" y="-2.20" width="0.9" height="2.2" fill="#80868b"/><rect x="332.18" y="-4.50" width="0.9" height="4.5" fill="#80868b"/><rect x="338.56" y="-2.20" width="0.9" height="2.2" fill="#80868b"/><rect x="344.94" y="-2.20" width="0.9" height="2.2" fill="#80868b"/><rect x="351.32" y="-2.20" width="0.9" height="2.2" fill="#80868b"/><rect x="357.70" y="-2.20" width="0.9" height="2.2" fill="#80868b"/><rect x="364.08" y="-2.20" width="0.9" height="2.2" fill="#80868b"/><rect x="370.46" y="-2.20" width="0.9" height="2.2" fill="#80868b"/><rect x="376.84" y="-2.20" width="0.9" height="2.2" fill="#80868b"/><rect x="383.23" y="-4.50" width="0.9" height="4.5" fill="#80868b"/><rect x="389.61" y="-2.20" width="0.9" height="2.2" fill="#80868b"/><rect x="395.99" y="-2.20" width="0.9" height="2.2" fill="#80868b"/><rect x="402.37" y="-2.20" width="0.9" height="2.2" fill="#80868b"/><rect x="408.75" y="-2.20" width="0.9" height="2.2" fill="#80868b"/><rect x="415.13" y="-2.20" width="0.9" height="2.2" fill="#80868b"/><rect x="421.51" y="-2.20" width="0.9" height="2.2" fill="#80868b"/><rect x="427.89" y="-2.20" width="0.9" height="2.2" fill="#80868b"/><rect x="434.27" y="-4.50" width="0.9" height="4.5" fill="#80868b"/><rect x="440.66" y="-2.20" width="0.9" height="2.2" fill="#80868b"/><rect x="447.04" y="-2.20" width="0.9" height="2.2" fill="#80868b"/><rect x="453.42" y="-2.20" width="0.9" height="2.2" fill="#80868b"/><rect x="459.80" y="-2.20" width="0.9" height="2.2" fill="#80868b"/><rect x="466.18" y="-2.20" width="0.9" height="2.2" fill="#80868b"/><rect x="472.56" y="-2.20" width="0.9" height="2.2" fill="#80868b"/><rect x="478.94" y="-2.20" width="0.9" height="2.2" fill="#80868b"/><rect x="485.32" y="-4.50" width="0.9" height="4.5" fill="#80868b"/><rect x="491.71" y="-2.20" width="0.9" height="2.2" fill="#80868b"/><rect x="498.09" y="-2.20" width="0.9" height="2.2" fill="#80868b"/><rect x="504.47" y="-2.20" width="0.9" height="2.2" fill="#80868b"/><rect x="510.85" y="-2.20" width="0.9" height="2.2" fill="#80868b"/></svg>
<div class="t" style="left:205.96px;top:36.20px;font-size:7.5px;line-height:9.0px;color:#555;">1</div>
<div class="t" style="left:257.01px;top:36.20px;font-size:7.5px;line-height:9.0px;color:#555;">2</div>
<div class="t" style="left:308.06px;top:36.20px;font-size:7.5px;line-height:9.0px;color:#555;">3</div>
<div class="t" style="left:359.11px;top:36.20px;font-size:7.5px;line-height:9.0px;color:#555;">4</div>
<div class="t" style="left:410.16px;top:36.20px;font-size:7.5px;line-height:9.0px;color:#555;">5</div>
<div class="t" style="left:461.21px;top:36.20px;font-size:7.5px;line-height:9.0px;color:#555;">6</div>
<div class="t" style="left:512.26px;top:36.20px;font-size:7.5px;line-height:9.0px;color:#555;">7</div>
<div class="t" style="left:563.31px;top:36.20px;font-size:7.5px;line-height:9.0px;color:#555;">8</div>
<div class="t" style="left:614.36px;top:36.20px;font-size:7.5px;line-height:9.0px;color:#555;">9</div>
<svg class="a" style="left:136px;top:57.5px" width="6.5" height="280" viewBox="-6.5 0 6.5 280"><rect x="-2.20" y="0.75" width="2.2" height="0.9" fill="#80868b"/><rect x="-2.20" y="7.13" width="2.2" height="0.9" fill="#80868b"/><rect x="-3.00" y="13.51" width="3" height="0.9" fill="#80868b"/><rect x="-2.20" y="19.89" width="2.2" height="0.9" fill="#80868b"/><rect x="-5.00" y="26.27" width="5" height="0.9" fill="#80868b"/><rect x="-2.20" y="32.66" width="2.2" height="0.9" fill="#80868b"/><rect x="-3.00" y="39.04" width="3" height="0.9" fill="#80868b"/><rect x="-2.20" y="45.42" width="2.2" height="0.9" fill="#80868b"/><rect x="-2.20" y="51.80" width="2.2" height="0.9" fill="#80868b"/><rect x="-2.20" y="58.18" width="2.2" height="0.9" fill="#80868b"/><rect x="-3.00" y="64.56" width="3" height="0.9" fill="#80868b"/><rect x="-2.20" y="70.94" width="2.2" height="0.9" fill="#80868b"/><rect x="-5.00" y="77.32" width="5" height="0.9" fill="#80868b"/><rect x="-2.20" y="83.71" width="2.2" height="0.9" fill="#80868b"/><rect x="-3.00" y="90.09" width="3" height="0.9" fill="#80868b"/><rect x="-2.20" y="96.47" width="2.2" height="0.9" fill="#80868b"/><rect x="-2.20" y="102.85" width="2.2" height="0.9" fill="#80868b"/><rect x="-2.20" y="109.23" width="2.2" height="0.9" fill="#80868b"/><rect x="-3.00" y="115.61" width="3" height="0.9" fill="#80868b"/><rect x="-2.20" y="121.99" width="2.2" height="0.9" fill="#80868b"/><rect x="-5.00" y="128.38" width="5" height="0.9" fill="#80868b"/><rect x="-2.20" y="134.76" width="2.2" height="0.9" fill="#80868b"/><rect x="-3.00" y="141.14" width="3" height="0.9" fill="#80868b"/><rect x="-2.20" y="147.52" width="2.2" height="0.9" fill="#80868b"/><rect x="-2.20" y="153.90" width="2.2" height="0.9" fill="#80868b"/><rect x="-2.20" y="160.28" width="2.2" height="0.9" fill="#80868b"/><rect x="-3.00" y="166.66" width="3" height="0.9" fill="#80868b"/><rect x="-2.20" y="173.04" width="2.2" height="0.9" fill="#80868b"/><rect x="-5.00" y="179.43" width="5" height="0.9" fill="#80868b"/><rect x="-2.20" y="185.81" width="2.2" height="0.9" fill="#80868b"/><rect x="-3.00" y="192.19" width="3" height="0.9" fill="#80868b"/><rect x="-2.20" y="198.57" width="2.2" height="0.9" fill="#80868b"/><rect x="-2.20" y="204.95" width="2.2" height="0.9" fill="#80868b"/><rect x="-2.20" y="211.33" width="2.2" height="0.9" fill="#80868b"/><rect x="-3.00" y="217.71" width="3" height="0.9" fill="#80868b"/><rect x="-2.20" y="224.09" width="2.2" height="0.9" fill="#80868b"/><rect x="-5.00" y="230.47" width="5" height="0.9" fill="#80868b"/><rect x="-2.20" y="236.86" width="2.2" height="0.9" fill="#80868b"/><rect x="-3.00" y="243.24" width="3" height="0.9" fill="#80868b"/><rect x="-2.20" y="249.62" width="2.2" height="0.9" fill="#80868b"/><rect x="-2.20" y="256.00" width="2.2" height="0.9" fill="#80868b"/><rect x="-2.20" y="262.38" width="2.2" height="0.9" fill="#80868b"/><rect x="-3.00" y="268.76" width="3" height="0.9" fill="#80868b"/><rect x="-2.20" y="275.14" width="2.2" height="0.9" fill="#80868b"/><rect x="-5.00" y="281.52" width="5" height="0.9" fill="#80868b"/><rect x="-2.20" y="287.91" width="2.2" height="0.9" fill="#80868b"/><rect x="-3.00" y="294.29" width="3" height="0.9" fill="#80868b"/><rect x="-2.20" y="300.67" width="2.2" height="0.9" fill="#80868b"/></svg>
<div class="t" style="left:131px;top:104.8px;width:10px;height:10px;font-size:7.5px;line-height:10px;text-align:center;color:#5f6368;transform:rotate(-90deg)">1</div>
<div class="t" style="left:131px;top:155.8px;width:10px;height:10px;font-size:7.5px;line-height:10px;text-align:center;color:#5f6368;transform:rotate(-90deg)">2</div>
<div class="t" style="left:131px;top:206.8px;width:10px;height:10px;font-size:7.5px;line-height:10px;text-align:center;color:#5f6368;transform:rotate(-90deg)">3</div>
<div class="t" style="left:131px;top:257.9px;width:10px;height:10px;font-size:7.5px;line-height:10px;text-align:center;color:#5f6368;transform:rotate(-90deg)">4</div>
<div class="t" style="left:131px;top:308.9px;width:10px;height:10px;font-size:7.5px;line-height:10px;text-align:center;color:#5f6368;transform:rotate(-90deg)">5</div>
<div class="a" style="left:156.5px;top:57.5px;width:511px;height:300px;background:#fff;border:1px solid #dfe1e4;"></div>
<div class="t" style="left:192.50px;top:59.34px;font-size:10.6px;line-height:12.719999999999999px;color:#111;font-weight:bold;transform:scaleX(0.9973);transform-origin:0 0;-webkit-text-stroke:0.25px #111;">2. Follow the steps to write your own film review.</div>
<div class="t" style="left:209.30px;top:83.64px;font-size:10.6px;line-height:12.719999999999999px;color:#111;transform:scaleX(1.0177);transform-origin:0 0;-webkit-text-stroke:0.25px #111;">1.</div>
<div class="t" style="left:225.00px;top:83.64px;font-size:10.6px;line-height:12.719999999999999px;color:#111;transform:scaleX(0.9883);transform-origin:0 0;-webkit-text-stroke:0.25px #111;">Think of a film you have watched.</div>
<div class="t" style="left:209.30px;top:95.84px;font-size:10.6px;line-height:12.719999999999999px;color:#111;transform:scaleX(1.0177);transform-origin:0 0;-webkit-text-stroke:0.25px #111;">2.</div>
<div class="t" style="left:225.00px;top:95.84px;font-size:10.6px;line-height:12.719999999999999px;color:#111;transform:scaleX(1.0017);transform-origin:0 0;-webkit-text-stroke:0.25px #111;">Make notes for each of the questions in Activity 1.</div>
<div class="t" style="left:209.30px;top:107.94px;font-size:10.6px;line-height:12.719999999999999px;color:#111;transform:scaleX(1.0177);transform-origin:0 0;-webkit-text-stroke:0.25px #111;">3.</div>
<div class="t" style="left:225.00px;top:107.94px;font-size:10.6px;line-height:12.719999999999999px;color:#111;transform:scaleX(0.9977);transform-origin:0 0;-webkit-text-stroke:0.25px #111;">Write your review using the your notes and the model text. Use some of the words and</div>
<div class="t" style="left:225.00px;top:119.94px;font-size:10.6px;line-height:12.719999999999999px;color:#111;transform:scaleX(0.9935);transform-origin:0 0;-webkit-text-stroke:0.25px #111;">phrases <b>in bold</b>. Write between 100 and 150 words.</div>
<div class="t" style="left:240.60px;top:140.00px;font-size:11px;line-height:13.2px;color:#111;transform:scaleX(1.0340);transform-origin:0 0;-webkit-text-stroke:0.25px #111;">1.</div>
<div class="t" style="left:256.40px;top:140.00px;font-size:11px;line-height:13.2px;color:#111;transform:scaleX(0.9435);transform-origin:0 0;-webkit-text-stroke:0.25px #111;">What is the title of the film?</div>
<div class="t" style="left:396.90px;top:140.00px;font-size:11px;line-height:13.2px;color:#111;transform:scaleX(1.0340);transform-origin:0 0;-webkit-text-stroke:0.25px #111;">7.</div>
<div class="t" style="left:412.70px;top:140.00px;font-size:11px;line-height:13.2px;color:#111;transform:scaleX(0.9483);transform-origin:0 0;-webkit-text-stroke:0.25px #111;">Who stars in the film?</div>
<div class="t" style="left:240.60px;top:153.12px;font-size:11px;line-height:13.2px;color:#111;transform:scaleX(1.0340);transform-origin:0 0;-webkit-text-stroke:0.25px #111;">2.</div>
<div class="t" style="left:256.40px;top:153.12px;font-size:11px;line-height:13.2px;color:#111;transform:scaleX(0.9376);transform-origin:0 0;-webkit-text-stroke:0.25px #111;">What genre is it?</div>
<div class="t" style="left:396.90px;top:153.12px;font-size:11px;line-height:13.2px;color:#111;transform:scaleX(1.0340);transform-origin:0 0;-webkit-text-stroke:0.25px #111;">8.</div>
<div class="t" style="left:412.70px;top:153.12px;font-size:11px;line-height:13.2px;color:#111;transform:scaleX(0.9441);transform-origin:0 0;-webkit-text-stroke:0.25px #111;">Who plays the main role(s)?</div>
<div class="t" style="left:240.60px;top:166.24px;font-size:11px;line-height:13.2px;color:#111;transform:scaleX(1.0340);transform-origin:0 0;-webkit-text-stroke:0.25px #111;">3.</div>
<div class="t" style="left:256.40px;top:166.24px;font-size:11px;line-height:13.2px;color:#111;transform:scaleX(0.9324);transform-origin:0 0;-webkit-text-stroke:0.25px #111;">What is it about?</div>
<div class="t" style="left:396.90px;top:166.24px;font-size:11px;line-height:13.2px;color:#111;transform:scaleX(1.0340);transform-origin:0 0;-webkit-text-stroke:0.25px #111;">9.</div>
<div class="t" style="left:412.70px;top:166.24px;font-size:11px;line-height:13.2px;color:#111;transform:scaleX(0.9489);transform-origin:0 0;-webkit-text-stroke:0.25px #111;">Who is your favourite character in the</div>
<div class="t" style="left:240.60px;top:179.36px;font-size:11px;line-height:13.2px;color:#111;transform:scaleX(1.0340);transform-origin:0 0;-webkit-text-stroke:0.25px #111;">4.</div>
<div class="t" style="left:256.40px;top:179.36px;font-size:11px;line-height:13.2px;color:#111;transform:scaleX(0.9383);transform-origin:0 0;-webkit-text-stroke:0.25px #111;">Is it based on a book?</div>
<div class="t" style="left:412.70px;top:179.36px;font-size:11px;line-height:13.2px;color:#111;transform:scaleX(0.9411);transform-origin:0 0;-webkit-text-stroke:0.25px #111;">film? (Why?)</div>
<div class="t" style="left:240.60px;top:192.48px;font-size:11px;line-height:13.2px;color:#111;transform:scaleX(1.0340);transform-origin:0 0;-webkit-text-stroke:0.25px #111;">5.</div>
<div class="t" style="left:256.40px;top:192.48px;font-size:11px;line-height:13.2px;color:#111;transform:scaleX(0.9360);transform-origin:0 0;-webkit-text-stroke:0.25px #111;">Where is the film set?</div>
<div class="t" style="left:396.90px;top:192.48px;font-size:11px;line-height:13.2px;color:#111;transform:scaleX(0.9806);transform-origin:0 0;-webkit-text-stroke:0.25px #111;">10.</div>
<div class="t" style="left:412.70px;top:192.48px;font-size:11px;line-height:13.2px;color:#111;transform:scaleX(0.9429);transform-origin:0 0;-webkit-text-stroke:0.25px #111;">What kind of person would like this</div>
<div class="t" style="left:240.60px;top:205.60px;font-size:11px;line-height:13.2px;color:#111;transform:scaleX(1.0340);transform-origin:0 0;-webkit-text-stroke:0.25px #111;">6.</div>
<div class="t" style="left:256.40px;top:205.60px;font-size:11px;line-height:13.2px;color:#111;transform:scaleX(0.9393);transform-origin:0 0;-webkit-text-stroke:0.25px #111;">When is the film set?</div>
<div class="t" style="left:412.70px;top:205.60px;font-size:11px;line-height:13.2px;color:#111;transform:scaleX(0.8522);transform-origin:0 0;-webkit-text-stroke:0.25px #111;">film?</div>
<div class="a" style="left:183.5px;top:227.6px;width:456.5px;height:200px;background:transparent;border:1.2px solid #5283d2;"></div>
<div class="a" style="left:181.6px;top:225.8px;width:4.8px;height:4.8px;background:#3a6cc2;"></div>
<div class="a" style="left:409.2px;top:225.8px;width:4.8px;height:4.8px;background:#3a6cc2;"></div>
<div class="a" style="left:637.2px;top:225.8px;width:4.8px;height:4.8px;background:#3a6cc2;"></div>
<div class="a" style="left:181.6px;top:283.9px;width:4.8px;height:4.8px;background:#3a6cc2;"></div>
<div class="a" style="left:637.2px;top:283.9px;width:4.8px;height:4.8px;background:#3a6cc2;"></div>
<div class="a" style="left:411.1px;top:213px;width:1px;height:14px;background:#a9bfe6;"></div>
<div class="a" style="left:409.2px;top:210.5px;width:4.6px;height:4.6px;background:#3a6cc2;border-radius:50%;"></div>
<div class="t" style="left:189.90px;top:233.32px;font-size:9.8px;line-height:11.76px;color:#111;font-weight:bold;transform:scaleX(0.8557);transform-origin:0 0;">1 =</div>
<div class="t" style="left:189.90px;top:244.33px;font-size:9.8px;line-height:11.76px;color:#111;font-weight:bold;transform:scaleX(0.8557);transform-origin:0 0;">2 =</div>
<div class="t" style="left:189.90px;top:255.34px;font-size:9.8px;line-height:11.76px;color:#111;font-weight:bold;transform:scaleX(0.8557);transform-origin:0 0;">3 =</div>
<div class="t" style="left:189.90px;top:266.35px;font-size:9.8px;line-height:11.76px;color:#111;font-weight:bold;transform:scaleX(0.8557);transform-origin:0 0;">4 =</div>
<div class="t" style="left:189.90px;top:277.36px;font-size:9.8px;line-height:11.76px;color:#111;font-weight:bold;transform:scaleX(0.8557);transform-origin:0 0;">5 =</div>
<div class="t" style="left:189.90px;top:288.37px;font-size:9.8px;line-height:11.76px;color:#111;font-weight:bold;transform:scaleX(0.8557);transform-origin:0 0;">6 =</div>
<div class="t" style="left:189.90px;top:299.38px;font-size:9.8px;line-height:11.76px;color:#111;font-weight:bold;transform:scaleX(0.8557);transform-origin:0 0;">7 =</div>
<div class="t" style="left:189.90px;top:310.39px;font-size:9.8px;line-height:11.76px;color:#111;font-weight:bold;transform:scaleX(0.8557);transform-origin:0 0;">8 =</div>
<div class="t" style="left:189.90px;top:321.40px;font-size:9.8px;line-height:11.76px;color:#111;font-weight:bold;transform:scaleX(0.8557);transform-origin:0 0;">9 =</div>
</div>
<svg class="a" style="left:28px;top:483.5px" width="17" height="18.5" viewBox="0 0 17 18.5"><rect x="5.2" y="0.8" width="6" height="10.6" rx="3" fill="#cfcfcf"/><path d="M2.8 8.2C2.8 11.4 5.2 13.3 8.2 13.3S13.6 11.4 13.6 8.2" stroke="#cfcfcf" stroke-width="1.3" fill="none"/><path d="M8.2 13.3V16.6M5.2 16.8H11.2" stroke="#cfcfcf" stroke-width="1.3"/><path d="M1 17.5L16 2" stroke="#d9342f" stroke-width="1.5"/></svg>
<div class="t" style="left:17.60px;top:504.36px;font-size:9.4px;line-height:11.28px;color:#c6c6c6;font-weight:bold;transform:scaleX(0.9425);transform-origin:0 0;">Unmute</div>
<svg class="a" style="left:54.6px;top:490.5px" width="8" height="5" viewBox="0 0 8 5"><path d="M1 4.2L4 1.2L7 4.2" stroke="#d0d0d0" stroke-width="1.3" fill="none"/></svg>
<svg class="a" style="left:94.5px;top:484.5px" width="20" height="16" viewBox="0 0 20 16"><rect x="1" y="3.2" width="12.5" height="11" rx="2" fill="#cfcfcf"/><path d="M14.5 7.2L19 4.5V13L14.5 10.3Z" fill="#cfcfcf"/><path d="M1.8 15.6L17 1" stroke="#d9342f" stroke-width="1.5"/></svg>
<div class="t" style="left:81.30px;top:504.36px;font-size:9.4px;line-height:11.28px;color:#c6c6c6;font-weight:bold;transform:scaleX(0.9062);transform-origin:0 0;">Start Video</div>
<svg class="a" style="left:128.5px;top:490.5px" width="8" height="5" viewBox="0 0 8 5"><path d="M1 4.2L4 1.2L7 4.2" stroke="#d0d0d0" stroke-width="1.3" fill="none"/></svg>
<svg class="a" style="left:204.5px;top:485.5px" width="20" height="15" viewBox="0 0 20 15"><circle cx="6" cy="3.6" r="3.2" fill="#cfcfcf"/><circle cx="14.2" cy="5" r="2.7" fill="#cfcfcf"/><path d="M0.5 14.5C0.5 10.3 3 8.5 6 8.5S11.5 10.3 11.5 14.5Z" fill="#cfcfcf"/><path d="M10.5 14.5C10.5 11.3 12.3 9.7 14.2 9.7S19.5 11.3 19.5 14.5Z" fill="#cfcfcf"/></svg>
<div class="t" style="left:226.90px;top:485.80px;font-size:10px;line-height:12.0px;color:#cfcfcf;font-weight:bold;transform:scaleX(0.7461);transform-origin:0 0;">13</div>
<div class="t" style="left:191.70px;top:504.36px;font-size:9.4px;line-height:11.28px;color:#c6c6c6;font-weight:bold;transform:scaleX(0.8589);transform-origin:0 0;">Participants</div>
<svg class="a" style="left:250.7px;top:490.5px" width="8" height="5" viewBox="0 0 8 5"><path d="M1 4.2L4 1.2L7 4.2" stroke="#d0d0d0" stroke-width="1.3" fill="none"/></svg>
<svg class="a" style="left:288px;top:486.5px" width="17" height="14" viewBox="0 0 17 14"><path d="M2.5 0.8H14.5C15.6 0.8 16.4 1.6 16.4 2.7V8.8C16.4 9.9 15.6 10.7 14.5 10.7H7L3.5 13.5V10.7H2.5C1.4 10.7 0.6 9.9 0.6 8.8V2.7C0.6 1.6 1.4 0.8 2.5 0.8Z" fill="#cfcfcf"/></svg>
<div class="a" style="left:299.3px;top:482.4px;width:16.3px;height:11.2px;background:#d83a3a;border-radius:5.6px;"></div>
<div class="t" style="left:303.10px;top:483.20px;font-size:8px;line-height:9.6px;color:#fff;font-weight:bold;transform:scaleX(0.9656);transform-origin:0 0;">16</div>
<div class="t" style="left:287.60px;top:504.36px;font-size:9.4px;line-height:11.28px;color:#c6c6c6;font-weight:bold;transform:scaleX(0.8828);transform-origin:0 0;">Chat</div>
<svg class="a" style="left:317px;top:490.5px" width="8" height="5" viewBox="0 0 8 5"><path d="M1 4.2L4 1.2L7 4.2" stroke="#d0d0d0" stroke-width="1.3" fill="none"/></svg>
<div class="a" style="left:358.5px;top:486px;width:17.5px;height:14px;background:#22d55a;border-radius:2.5px;"></div>
<svg class="a" style="left:362px;top:488px" width="10" height="10" viewBox="0 0 10 10"><path d="M5 8.8V2.2M2.2 4.8L5 2L7.8 4.8" stroke="#0a2a12" stroke-width="1.6" fill="none"/></svg>
<div class="t" style="left:341.00px;top:504.36px;font-size:9.4px;line-height:11.28px;color:#2ccd5c;font-weight:bold;transform:scaleX(0.8542);transform-origin:0 0;">Share Screen</div>
<svg class="a" style="left:426.5px;top:484px" width="16" height="17.5" viewBox="0 0 16 17.5"><path d="M2.3 0.5H10.2L15.5 5.8V15.2C15.5 16.3 14.6 17.2 13.5 17.2H2.3C1.2 17.2 0.5 16.3 0.5 15.2V2.5C0.5 1.4 1.2 0.5 2.3 0.5Z" fill="#cfcfcf"/><path d="M10.2 0.5V4.2C10.2 5.2 10.9 5.8 11.8 5.8H15.5" fill="#1a1a1a" stroke="#1a1a1a" stroke-width="0.9"/><path d="M7.3 7.8L8.3 10.4L10.9 11.4L8.3 12.4L7.3 15L6.3 12.4L3.7 11.4L6.3 10.4Z" fill="#1a1a1a"/></svg>
<div class="t" style="left:415.00px;top:504.36px;font-size:9.4px;line-height:11.28px;color:#c6c6c6;font-weight:bold;transform:scaleX(0.9056);transform-origin:0 0;">Summary</div>
<svg class="a" style="left:489px;top:484.5px" width="19" height="17.5" viewBox="0 0 19 17.5"><path d="M8.5 2.5C9.3 7.8 11.2 9.7 16.8 10.2C11.2 10.7 9.3 12.6 8.5 17.8C7.7 12.6 5.8 10.7 0.2 10.2C5.8 9.7 7.7 7.8 8.5 2.5Z" fill="#cfcfcf"/><path d="M15.6 0C15.9 1.9 16.6 2.6 18.6 2.9C16.6 3.2 15.9 3.9 15.6 5.8C15.3 3.9 14.6 3.2 12.6 2.9C14.6 2.6 15.3 1.9 15.6 0Z" fill="#cfcfcf"/></svg>
<div class="t" style="left:470.00px;top:504.36px;font-size:9.4px;line-height:11.28px;color:#c6c6c6;font-weight:bold;transform:scaleX(0.9127);transform-origin:0 0;">AI Companion</div>
<svg class="a" style="left:555.5px;top:485.7px" width="15.4" height="15.4" viewBox="0 0 15.4 15.4"><circle cx="7.7" cy="7.7" r="6.8" stroke="#cfcfcf" stroke-width="1.5" fill="none"/><circle cx="7.7" cy="7.7" r="4.9" fill="#cfcfcf"/></svg>
<div class="t" style="left:549.30px;top:504.36px;font-size:9.4px;line-height:11.28px;color:#c6c6c6;font-weight:bold;transform:scaleX(0.8573);transform-origin:0 0;">Record</div>
<svg class="a" style="left:616px;top:484.5px" width="18" height="17" viewBox="0 0 18 17"><circle cx="7.6" cy="9" r="6.9" fill="#cfcfcf"/><circle cx="5.2" cy="7.6" r="0.95" fill="#1a1a1a"/><circle cx="10" cy="7.6" r="0.95" fill="#1a1a1a"/><path d="M4.5 10.3C5.5 12.2 9.7 12.2 10.7 10.3" stroke="#1a1a1a" stroke-width="1.1" fill="none"/><path d="M14.3 0.5V5.5M11.8 3H16.8" stroke="#cfcfcf" stroke-width="1.5"/></svg>
<div class="t" style="left:604.60px;top:504.36px;font-size:9.4px;line-height:11.28px;color:#c6c6c6;font-weight:bold;transform:scaleX(0.8502);transform-origin:0 0;">Reactions</div>
<svg class="a" style="left:677px;top:487px" width="14" height="13" viewBox="0 0 14 13"><path d="M1 5V3C1 1.9 1.9 1 3 1H5.5M13 8V10C13 11.1 12.1 12 11 12H8.5" stroke="#cfcfcf" stroke-width="1.4" fill="none"/><circle cx="11" cy="3" r="1.9" stroke="#cfcfcf" stroke-width="1.2" fill="none"/><circle cx="3" cy="10" r="1.9" stroke="#cfcfcf" stroke-width="1.2" fill="none"/></svg>
<div class="t" style="left:673.50px;top:504.36px;font-size:9.4px;line-height:11.28px;color:#c6c6c6;font-weight:bold;transform:scaleX(0.8747);transform-origin:0 0;">Apps</div>
<svg class="a" style="left:742px;top:485.5px" width="17" height="13.5" viewBox="0 0 17 13.5"><rect x="0.8" y="0.8" width="14" height="10.5" rx="1.8" stroke="#cfcfcf" stroke-width="1.4" fill="none"/><rect x="6" y="9.5" width="10.5" height="3.6" rx="1.8" fill="#cfcfcf" stroke="#1a1a1a" stroke-width="0.9"/></svg>
<div class="t" style="left:724.90px;top:504.36px;font-size:9.4px;line-height:11.28px;color:#c6c6c6;font-weight:bold;transform:scaleX(0.9105);transform-origin:0 0;">Whiteboards</div>
<svg class="a" style="left:817.5px;top:485.5px" width="14" height="15.5" viewBox="0 0 14 15.5"><rect x="0.8" y="0.8" width="10.5" height="13.5" rx="2" stroke="#cfcfcf" stroke-width="1.3" fill="none"/><path d="M3.5 4.3H8.6M3.5 6.6H8.6M3.5 8.9H7" stroke="#cfcfcf" stroke-width="1"/><rect x="3.5" y="11.8" width="10" height="3.5" rx="1.7" fill="#cfcfcf" stroke="#1a1a1a" stroke-width="0.9"/></svg>
<div class="t" style="left:811.80px;top:504.36px;font-size:9.4px;line-height:11.28px;color:#c6c6c6;font-weight:bold;transform:scaleX(0.8907);transform-origin:0 0;">Notes</div>
<svg class="a" style="left:884px;top:491.5px" width="16" height="3.5" viewBox="0 0 16 3.5"><circle cx="2" cy="1.7" r="1.6" fill="#cfcfcf"/><circle cx="8" cy="1.7" r="1.6" fill="#cfcfcf"/><circle cx="14" cy="1.7" r="1.6" fill="#cfcfcf"/></svg>
<div class="t" style="left:881.00px;top:504.36px;font-size:9.4px;line-height:11.28px;color:#c6c6c6;font-weight:bold;transform:scaleX(0.9640);transform-origin:0 0;">More</div>
<div class="a" style="left:969.5px;top:490px;width:46px;height:20px;background:#c8232a;border-radius:4.5px;"></div>
<div class="t" style="left:979.35px;top:493.96px;font-size:9.4px;line-height:11.28px;color:#fff;font-weight:bold;transform:scaleX(0.9213);transform-origin:0 0;">Leave</div>
</body></html>
